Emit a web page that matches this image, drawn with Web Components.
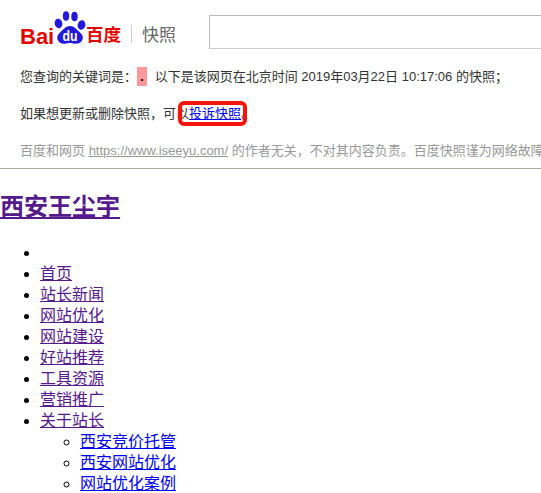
<!DOCTYPE html>
<html lang="zh">
<head>
<meta charset="utf-8">
<title>百度快照</title>
<style>
    html, body { margin: 0; background: #fff; overflow: hidden; }
    body { font-family: "Liberation Sans", "Noto Sans CJK SC", sans-serif; }
</style>
</head>
<body>
<snapshot-bar></snapshot-bar>
<snapshot-notice>
    <span slot="keyword">.</span>
</snapshot-notice>
<site-title>西安王尘宇</site-title>
<site-nav></site-nav>

<script>
const CJK = `"Liberation Sans", "Noto Sans CJK SC", sans-serif`;

class SnapshotBar extends HTMLElement {
    constructor() {
        super();
        const shadow = this.attachShadow({ mode: "open" });
        shadow.innerHTML = `
            <style>
                :host {
                    display: flex;
                    align-items: flex-start;
                    height: 60px;
                    padding-left: 20px;
                    font-family: ${CJK};
                }
                .logo {
                    display: flex;
                    flex: none;
                    align-items: flex-end;
                    height: 34px;
                    margin-top: 11px;
                    width: 101px;
                    color: #e10601;
                    font-weight: bold;
                    white-space: nowrap;
                }
                .bai { flex: none; font-size: 22px; line-height: 22px; width: 34px; margin-bottom: -3px; }
                .du { flex: none; font-size: 17.5px; line-height: 23px; margin-bottom: -2px; }
                svg { display: block; flex: none; }
                .rule { flex: none; width: 1px; height: 18px; margin: 25px 10px 0 10px; background: #ccc; }
                .name { flex: none; margin-top: 25px; width: 67px; font-size: 17px; line-height: 21px; color: #666; }
                input {
                    flex: 1;
                    min-width: 0;
                    box-sizing: border-box;
                    height: 34px;
                    margin-top: 15px;
                    border: 1px solid #bbb;
                    border-bottom-color: #ccc;
                    border-right: 0;
                    padding: 0;
                    background: #fff;
                }
            </style>
            <div class="logo">
                <span class="bai">Bai</span>
                <svg width="32" height="34" viewBox="0 0 32 34">
                    <g fill="#2319dc">
                        <ellipse cx="4.500" cy="12.500" rx="3.800" ry="4.800" transform="rotate(-15 4.500 12.500)"/>
                        <ellipse cx="12" cy="5" rx="3.200" ry="4.800"/>
                        <ellipse cx="20.500" cy="5.500" rx="3.200" ry="4.800"/>
                        <ellipse cx="27.500" cy="14" rx="3.800" ry="4.800" transform="rotate(15 27.500 14)"/>
                        <path d="M16 15c4 0 6 3 9 5.500 3 2.500 4.500 5 3.500 8-1 3-4.500 4.700-7.500 4.200-2-.3-3.500-.7-5-.7s-3 .4-5 .7c-3 .5-6.500-1.200-7.500-4.200-1-3 .5-5.500 3.500-8 3-2.500 5-5.500 9-5.500z"/>
                    </g>
                    <text x="8.500" y="30" fill="#fff" font-size="14" font-weight="bold" textLength="15" lengthAdjust="spacingAndGlyphs" font-family="Liberation Sans, sans-serif">du</text>
                </svg>
                <span class="du">百度</span>
            </div>
            <div class="rule"></div>
            <div class="name">快照</div>
            <input type="text" aria-label="搜索">
        `;
    }
}

class SnapshotNotice extends HTMLElement {
    constructor() {
        super();
        const shadow = this.attachShadow({ mode: "open" });
        shadow.innerHTML = `
            <style>
                :host {
                    display: block;
                    box-sizing: border-box;
                    height: 109px;
                    padding: 7px 0 0 20px;
                    border-bottom: 1px solid #aca899;
                    overflow: hidden;
                    font-family: ${CJK};
                    font-size: 13px;
                    line-height: 19px;
                    color: #333;
                    white-space: nowrap;
                }
                p { margin: 0 0 18px; }
                .hit { display: inline-block; width: 10px; text-align: center; margin: 0 4px 0 0; background: #ff9999; color: #000; font-weight: bold; }
                .complain { position: relative; }
                .complain a { color: #00e; }
                .complain::after {
                    content: "";
                    position: absolute;
                    left: -11px;
                    right: -6px;
                    top: -5px;
                    bottom: -5px;
                    border: 4px solid #f5140a;
                    border-radius: 6px;
                }
                .fine { color: #999; }
                .fine a { color: #999; }
            </style>
            <p>您查询的关键词是：<span class="hit"><slot name="keyword"></slot></span> 以下是该网页在北京时间 2019年03月22日 10:17:06 的快照；</p>
            <p>如果想更新或删除快照，可以<span class="complain"><a href="#">投诉快照</a></span>。</p>
            <p class="fine">百度和网页 <a href="#">https://www.iseeyu.com/</a> 的作者无关，不对其内容负责。百度快照谨为网络故障</p>
        `;
    }
}

class SiteTitle extends HTMLElement {
    constructor() {
        super();
        const shadow = this.attachShadow({ mode: "open" });
        shadow.innerHTML = `
            <style>
                :host { display: block; padding-top: 22px; font-family: ${CJK}; }
                h1 { margin: 0; font-size: 24px; line-height: 32px; font-weight: bold; }
                a { color: #551a8b; }
            </style>
            <h1><a href="#"><slot></slot></a></h1>
        `;
    }
}

class SiteNav extends HTMLElement {
    constructor() {
        super();
        const shadow = this.attachShadow({ mode: "open" });
        const visited = ["首页", "站长新闻", "网站优化", "网站建设", "好站推荐", "工具资源", "营销推广", "关于站长"];
        const sub = ["西安竞价托管", "西安网站优化", "网站优化案例"];
        const item = (t) => `<li><a href="#">${t}</a></li>`;
        shadow.innerHTML = `
            <style>
                :host { display: block; font-family: ${CJK}; font-size: 16px; line-height: 21px; color: #000; }
                ul { margin: 0; padding-left: 40px; list-style: disc; }
                :host > ul { margin-top: 19px; }
                ul ul { list-style: circle; }
                li { min-height: 21px; }
                a { color: #551a8b; }
                ul ul a { color: #00e; }
            </style>
            <ul>
                <li></li>
                ${visited.slice(0, -1).map(item).join("")}
                <li><a href="#">${visited[visited.length - 1]}</a>
                    <ul>${sub.map(item).join("")}</ul>
                </li>
            </ul>
        `;
    }
}

customElements.define("snapshot-bar", SnapshotBar);
customElements.define("snapshot-notice", SnapshotNotice);
customElements.define("site-title", SiteTitle);
customElements.define("site-nav", SiteNav);
</script>
</body>
</html>
